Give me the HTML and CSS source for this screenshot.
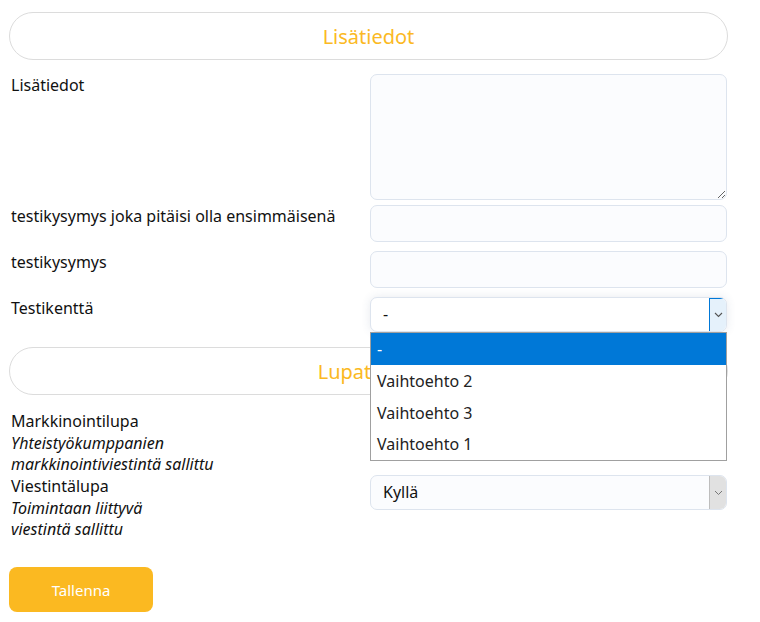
FILE: index.html
```html
<!DOCTYPE html>
<html lang="fi">
<head>
    <meta charset="UTF-8">
    <meta name="viewport" content="width=device-width, initial-scale=1.0">
    <title>Lisätiedot</title>
    <link rel="stylesheet" href="styles.css">
</head>
<body>

<form class="page" id="info-form">
    <h2 class="section-title">Lisätiedot</h2>

    <div class="form-row row-textarea">
        <label for="info">Lisätiedot</label>
        <textarea id="info" name="info"></textarea>
    </div>

    <div class="form-row row-first">
        <label for="q1">testikysymys joka pitäisi olla ensimmäisenä</label>
        <input type="text" id="q1" name="q1">
    </div>

    <div class="form-row">
        <label for="q2">testikysymys</label>
        <input type="text" id="q2" name="q2">
    </div>

    <div class="form-row">
        <label for="field">Testikenttä</label>
        <div class="select-wrap">
            <div class="select-box is-open" id="field">
                <span class="select-value">-</span>
                <span class="select-arrow">
                    <svg width="9" height="6" viewBox="0 0 9 6"><path d="M1 1 L4.5 4.5 L8 1" fill="none" stroke="#555" stroke-width="1.1"/></svg>
                </span>
            </div>
            <!-- Open option list of the select above -->
            <ul class="select-list">
                <li class="selected">-</li>
                <li>Vaihtoehto 2</li>
                <li>Vaihtoehto 3</li>
                <li>Vaihtoehto 1</li>
            </ul>
        </div>
    </div>

    <h2 class="section-title second">Lupatiedot</h2>

    <div class="form-row consent">
        <label for="marketing">Markkinointilupa<br><em>Yhteistyökumppanien<br>markkinointiviestintä sallittu</em></label>
        <div class="select-box" id="marketing">
            <span class="select-value">Kyllä</span>
            <span class="select-arrow">
                <svg width="9" height="6" viewBox="0 0 9 6"><path d="M1 1 L4.5 4.5 L8 1" fill="none" stroke="#777" stroke-width="1"/></svg>
            </span>
        </div>
    </div>

    <div class="form-row consent">
        <label for="messages">Viestintälupa<br><em>Toimintaan liittyvä<br>viestintä sallittu</em></label>
        <div class="select-box" id="messages">
            <span class="select-value">Kyllä</span>
            <span class="select-arrow">
                <svg width="9" height="6" viewBox="0 0 9 6"><path d="M1 1 L4.5 4.5 L8 1" fill="none" stroke="#777" stroke-width="1"/></svg>
            </span>
        </div>
    </div>

    <button type="submit" class="save-btn">Tallenna</button>
</form>

</body>
</html>
```

FILE: styles.css
```css
body {
    font-family: "Noto Sans", "Open Sans", sans-serif;
    font-size: 16px;
    color: #111;
    background-color: #fff;
    margin: 0;
    padding: 0;
}

.page {
    width: 719px;
    padding: 12px 0 0 9px;
}

.section-title {
    margin: 0 0 14px;
    height: 46px;
    border: 1px solid #dcdcdc;
    border-radius: 24px;
    font-size: 20px;
    font-weight: normal;
    color: #fbb923;
    text-align: center;
    line-height: 48px;
}

.section-title.second {
    margin-top: 15px;
    margin-bottom: 15px;
}

.form-row {
    display: grid;
    grid-template-columns: 361px 357px;
    margin-bottom: 9px;
}

.row-textarea {
    margin-bottom: 5px;
}

.form-row label {
    padding: 1px 0 0 2px;
    line-height: 21.5px;
}

.form-row label em {
    font-style: italic;
}

textarea,
input {
    box-sizing: border-box;
    width: 357px;
    border: 1px solid #dde4ee;
    border-radius: 7px;
    background-color: #fbfcfe;
    font: inherit;
    outline: none;
}

textarea {
    height: 126px;
    resize: vertical;
}

input {
    height: 37px;
}

.select-wrap {
    position: relative;
}

.select-box {
    box-sizing: border-box;
    height: 35px;
    display: flex;
    align-items: stretch;
    border: 1px solid #dde4ee;
    border-radius: 7px;
    background-color: #fbfcfe;
    overflow: hidden;
}

.select-box.is-open {
    background-color: #fff;
    box-shadow: 0 0 10px rgba(60, 80, 120, 0.12);
}

.select-value {
    flex: 1;
    padding-left: 12px;
    line-height: 33px;
}

.select-arrow {
    width: 16px;
    display: flex;
    align-items: center;
    justify-content: center;
    background-color: #e1e1e1;
    border-left: 1px solid #bdbdbd;
}

.is-open .select-arrow {
    background-color: #e5f1fb;
    border-left-color: #0078d7;
    border-top: 1px solid #0078d7;
}

.select-list {
    position: absolute;
    top: 35px;
    left: 0;
    z-index: 2;
    box-sizing: border-box;
    width: 357px;
    margin: 0;
    padding: 0;
    list-style-type: none;
    background-color: #fff;
    border: 1px solid #a0a0a0;
}

.select-list li {
    height: 31.5px;
    line-height: 32px;
    padding-left: 6px;
    color: #222;
}

.select-list li.selected {
    height: 32px;
    background-color: #0078d7;
    color: #fff;
}

.consent {
    margin-bottom: 0;
    height: 65px;
}

.consent + .consent {
    height: 66px;
}

.save-btn {
    margin-top: 26px;
    width: 144px;
    height: 45px;
    border: none;
    border-radius: 8px;
    background-color: #fbb921;
    color: #fff;
    font-family: inherit;
    font-size: 15px;
    cursor: pointer;
}
```
